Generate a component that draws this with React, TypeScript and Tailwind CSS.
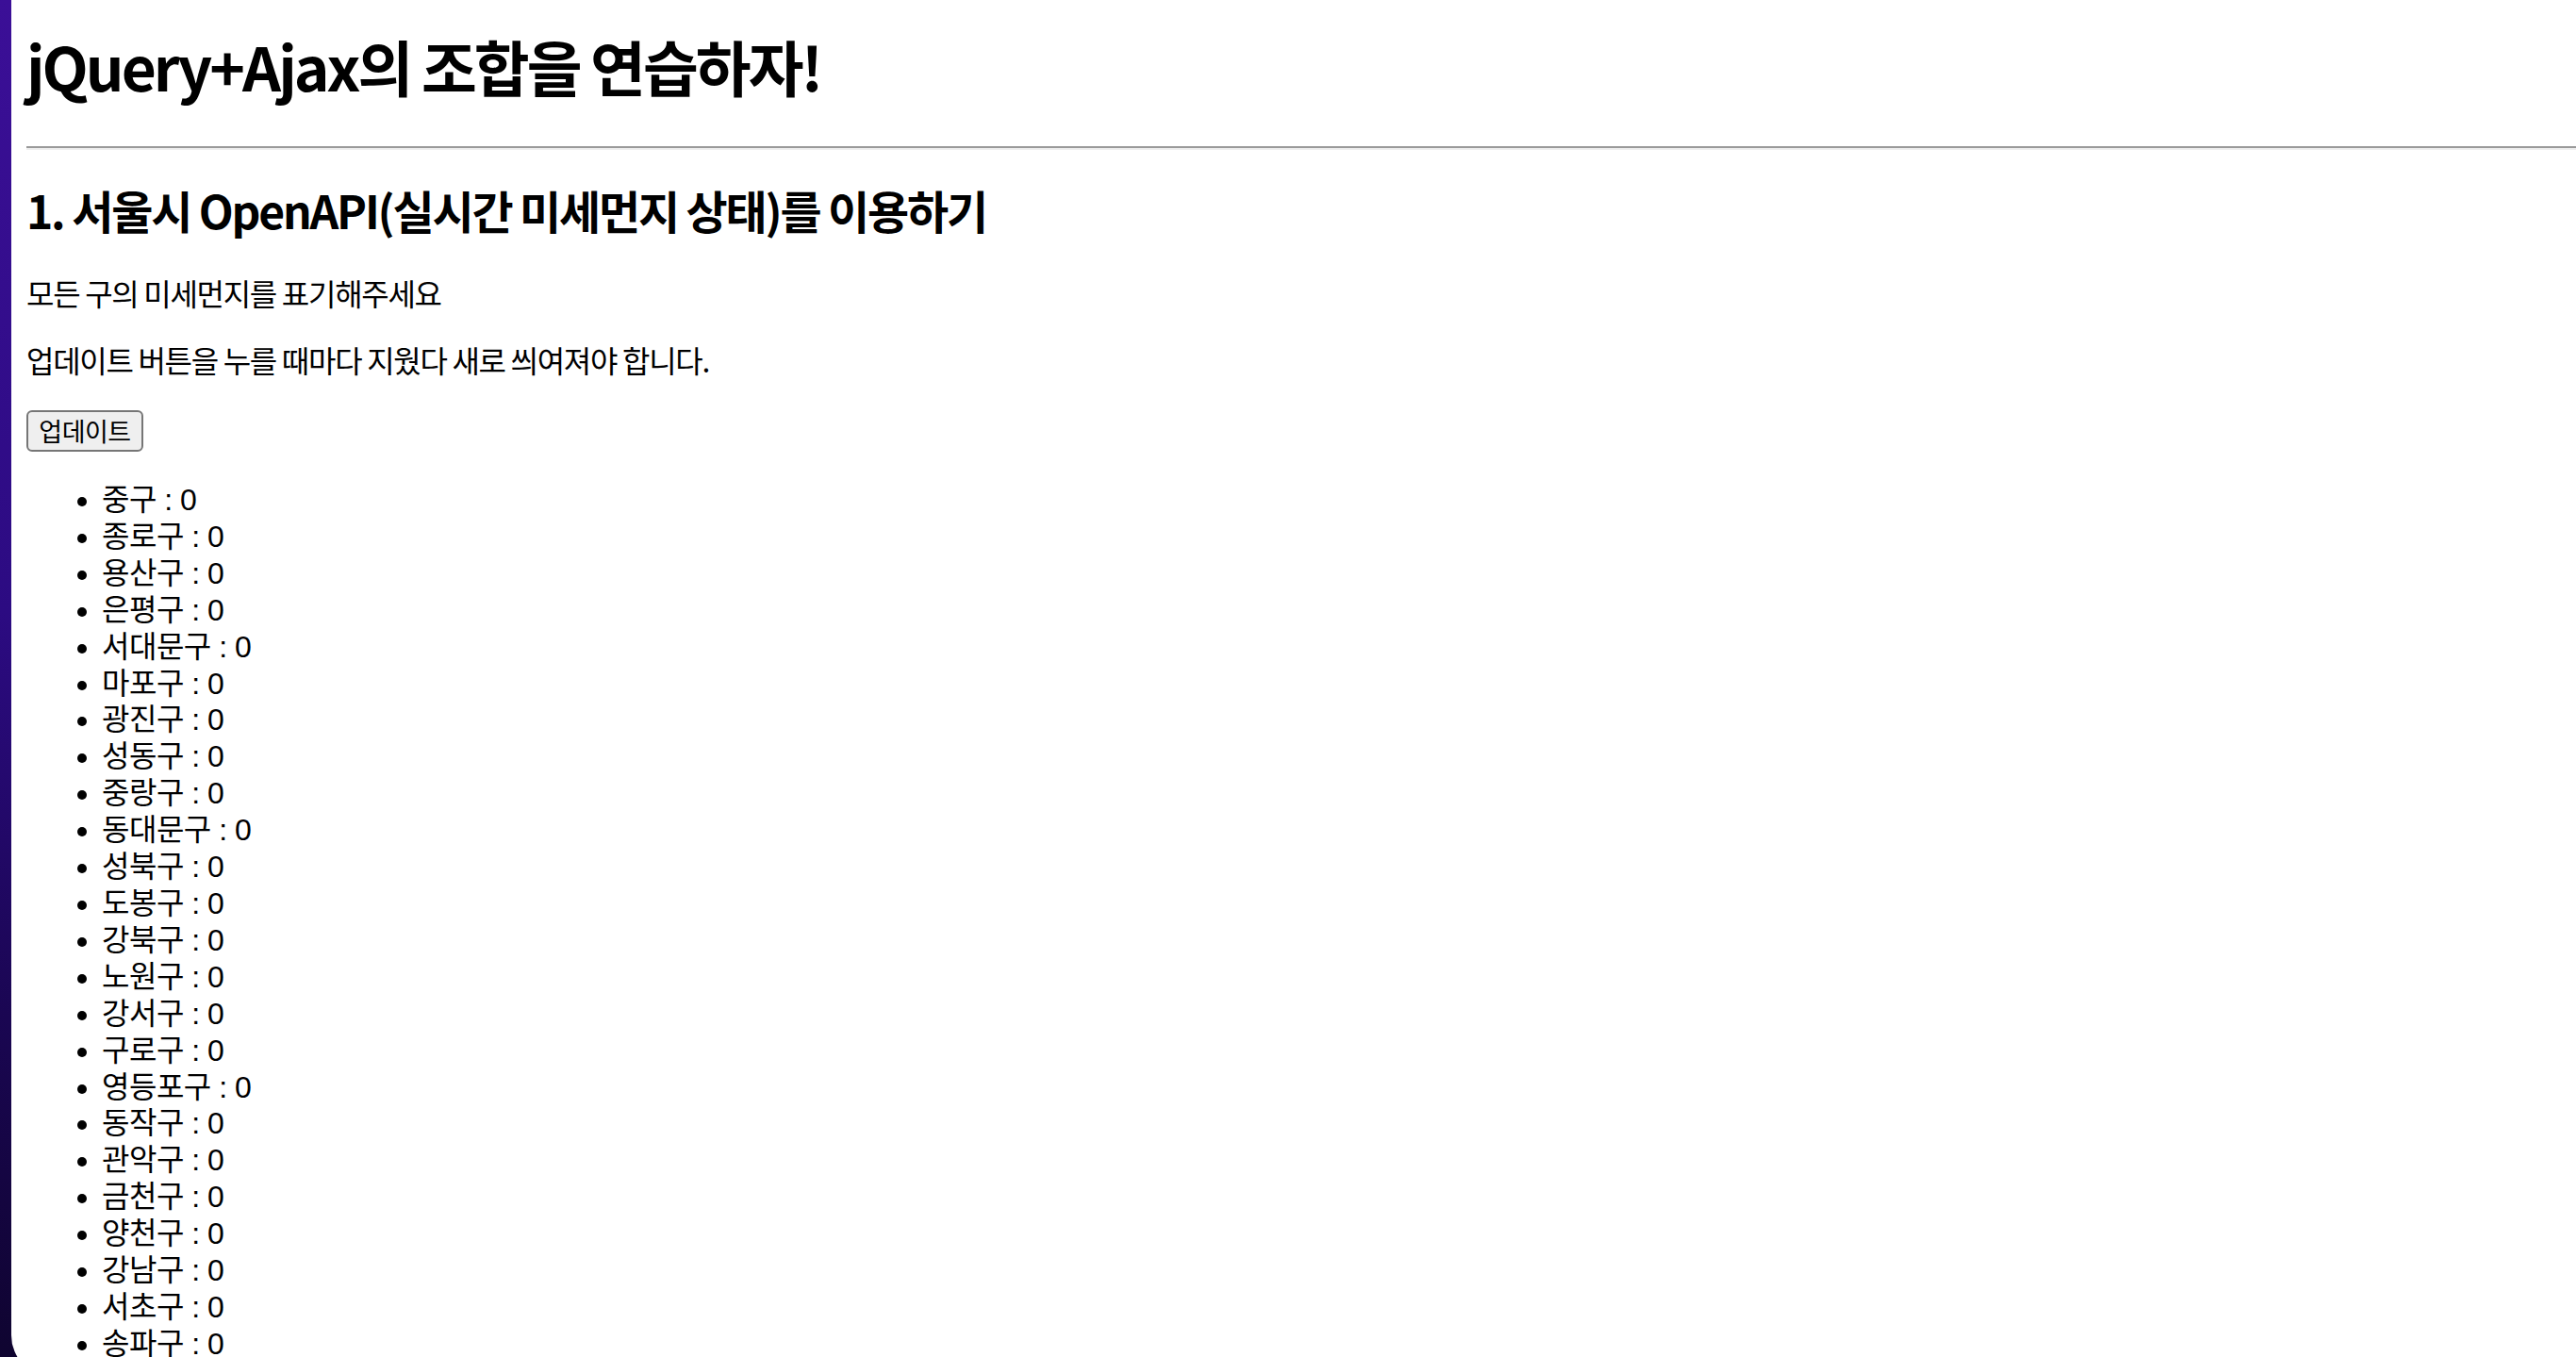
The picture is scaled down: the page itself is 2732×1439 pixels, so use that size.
import React from "react";

const gus = [
  "중구", "종로구", "용산구", "은평구", "서대문구", "마포구", "광진구", "성동구", "중랑구", "동대문구",
  "성북구", "도봉구", "강북구", "노원구", "강서구", "구로구", "영등포구", "동작구", "관악구", "금천구",
  "양천구", "강남구", "서초구", "송파구",
];

export default function App() {
  return (
    <div className="relative h-[1439px] w-[2732px] overflow-hidden bg-[linear-gradient(180deg,#3b0f97_0%,#2c0b82_45%,#1a0652_75%,#0f0430_100%)]">
      <div
        className="ml-[12px] h-[1460px] overflow-hidden rounded-bl-[44px] bg-white pl-[16px] text-black"
        style={{ fontFamily: '"Noto Sans CJK KR", "Liberation Sans", sans-serif' }}
      >
        <h1 className="pt-[29px] text-[64px] font-bold leading-[80px] tracking-[-3px]">
          jQuery+Ajax의 조합을 연습하자!
        </h1>
        <hr className="mt-[46px] h-[4px] border-0 border-t-2 border-b-2 border-t-[#9a9a9a] border-b-[#eeeeee]" />
        <h2 className="mt-[35px] text-[48px] font-bold leading-[56px] tracking-[-2.2px]">
          1. 서울시 OpenAPI(실시간 미세먼지 상태)를 이용하기
        </h2>
        <p className="mt-[41px] text-[32px] leading-[39px] tracking-[-1.3px]">모든 구의 미세먼지를 표기해주세요</p>
        <p className="mt-[32px] text-[32px] leading-[39px] tracking-[-1.3px]">
          업데이트 버튼을 누를 때마다 지웠다 새로 씌여져야 합니다.
        </p>
        <button className="mt-[34px] flex h-[44px] w-[124px] items-center justify-center rounded-[6px] border-2 border-[#767676] bg-[#efefef] text-[27px] leading-[30px] tracking-[-0.5px] text-black">
          업데이트
        </button>
        <ul
          className="mt-[32px] list-disc pl-[80px] text-[32px] leading-[38.9px] tracking-[-0.5px]"
          style={{ fontFamily: '"Liberation Sans", "Noto Sans CJK KR", sans-serif' }}
        >
          {gus.map((g) => (
            <li key={g}>{g} : 0</li>
          ))}
        </ul>
      </div>
    </div>
  );
}
